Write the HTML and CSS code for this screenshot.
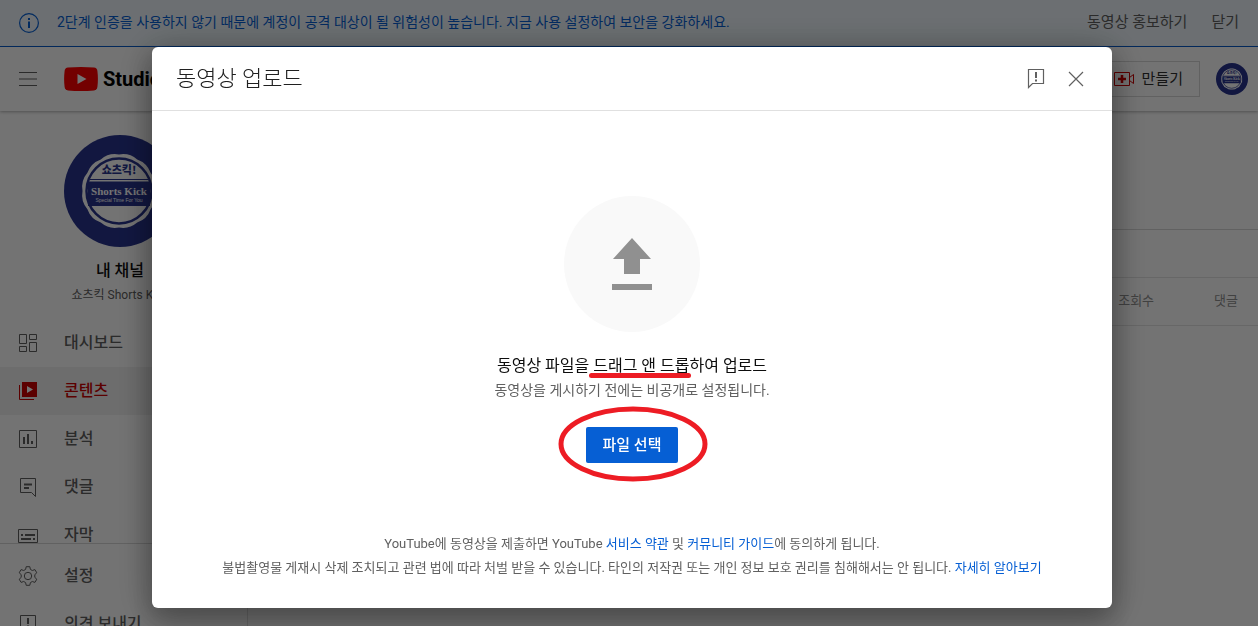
FILE: index.html
```html
<!DOCTYPE html>
<html lang="ko">
<head>
<meta charset="utf-8">
<meta name="viewport" content="width=device-width, initial-scale=1">
<title>YouTube Studio</title>
<link rel="stylesheet" href="styles.css">
</head>
<body>
<svg class="sprite" aria-hidden="true">
  <symbol id="badge" viewBox="0 0 112 112">
    <circle cx="56" cy="56" r="56" fill="#28348f"/>
    <path d="M91.500 56A22 22 0 0 1 86.600 74.200 22 22 0 0 1 73.200 87.600 22 22 0 0 1 55 92.500 22 22 0 0 1 36.800 87.600 22 22 0 0 1 23.400 74.200 22 22 0 0 1 18.500 56 22 22 0 0 1 23.400 37.800 22 22 0 0 1 36.800 24.400 22 22 0 0 1 55 19.500 22 22 0 0 1 73.200 24.400 22 22 0 0 1 86.600 37.800 22 22 0 0 1 91.500 56z" fill="#fff"/>
    <circle cx="55" cy="56" r="32.500" fill="none" stroke="#28348f" stroke-width="2.500"/>
    <path d="M26 44h58v1H26zM24 46.500h62V71H24z" fill="#28348f"/>
    <text class="badge-ko" x="55" y="39" text-anchor="middle">쇼츠킥!</text>
    <text class="badge-en" x="55" y="60" text-anchor="middle">Shorts Kick</text>
    <text class="badge-sub" x="55" y="67" text-anchor="middle">Special Time For You</text>
  </symbol>
</svg>

<div class="app">
  <div class="notice">
    <svg class="notice-icon" viewBox="0 0 20 20" fill="none" stroke="currentColor"><circle cx="10" cy="10" r="9.400" stroke-width="1.200"/><path d="M10 8.500V15M10 5v2" stroke-width="2"/></svg>
    <p class="notice-text">2단계 인증을 사용하지 않기 때문에 계정이 공격 대상이 될 위험성이 높습니다. 지금 사용 설정하여 보안을 강화하세요.</p>
    <button class="notice-action" type="button">동영상 홍보하기</button>
    <button class="notice-action" type="button">닫기</button>
  </div>

  <header class="topbar">
    <button class="icon-button" type="button" aria-label="메뉴">
      <svg width="18" height="14" viewBox="0 0 18 14" stroke="currentColor"><path d="M0 .5h18M0 7h18M0 13.500h18"/></svg>
    </button>
    <a class="brand" href="#" aria-label="YouTube Studio">
      <svg width="34" height="24" viewBox="0 0 34 24"><path d="M4 .6Q17-.6 30 .6q3 .4 3.400 3.400 1 8 0 16-.4 3-3.400 3.400-13 1.200-26 0-3-.4-3.400-3.400-1-8 0-16Q1 1 4 .6z" fill="#f00"/><path d="M13.500 7v10l9-5z" fill="#fff"/></svg>
      <span>Studio</span>
    </a>
    <button class="create" type="button">
      <svg width="20" height="14" viewBox="0 0 20 14" fill="none" stroke="#c00"><path d="M.5.5h15v13H.5z"/><path d="M15.500 5.500l4-3v9l-4-3"/><path d="M8 3v8M4 7h8" stroke-width="2.500"/></svg>
      <span>만들기</span>
    </button>
    <svg class="account"><use href="#badge"/></svg>
  </header>

  <div class="layout">
    <aside class="sidebar">
      <div class="channel">
        <svg class="channel-avatar"><use href="#badge"/></svg>
        <strong class="channel-title">내 채널</strong>
        <span class="channel-name">쇼츠킥 Shorts Kick</span>
      </div>
      <nav class="menu">
        <a class="menu-item" href="#"><svg viewBox="0 0 20 20"><path d="M1.500 1.500h7v9h-7zM11.500 1.500h7v5h-7zM1.500 13.500h7v5h-7zM11.500 9.500h7v9h-7z"/></svg><span>대시보드</span></a>
        <a class="menu-item active" href="#"><svg viewBox="0 0 20 20"><path d="M1.500 4v14.500H16"/><path d="M4 1h15v15H4z" fill="currentColor" stroke="none"/><path d="M9 5v7l6-3.500z" fill="#fff" stroke="none"/></svg><span>콘텐츠</span></a>
        <a class="menu-item" href="#"><svg viewBox="0 0 20 20"><path d="M1.500 1.500h17v17h-17z"/><path d="M6 8v7M10 5v10M14 12v3" stroke-width="2"/></svg><span>분석</span></a>
        <a class="menu-item" href="#"><svg viewBox="0 0 20 20"><path d="M2.500 1.500h15v18l-4-4h-11z"/><path d="M6 7.500h8M6 11h5" stroke-width="2"/></svg><span>댓글</span></a>
        <a class="menu-item" href="#"><svg viewBox="0 0 20 20"><path d="M.5 4.500h19v13H.5z"/><path d="M3 10h2M7 10h10M3 14h10M15 14h2" stroke-width="2"/></svg><span>자막</span></a>
      </nav>
      <div class="menu-footer">
        <a class="menu-item" href="#"><svg viewBox="0 0 20 20"><circle cx="10" cy="10" r="3.700"/><path d="M8.200.7h3.600l.6 2.700 1.900 1.100 2.600-.9 1.900 3.200-2 1.800v2.800l2 1.800-1.900 3.200-2.600-.9-1.900 1.100-.6 2.700H8.200l-.6-2.700-1.900-1.100-2.600.9-1.900-3.200 2-1.800V8.600l-2-1.800 1.900-3.200 2.600.9 1.900-1.100z"/></svg><span>설정</span></a>
        <a class="menu-item" href="#"><svg viewBox="0 0 20 20"><path d="M2.500 1.500h15v14h-11l-4 4z"/><path d="M10 4v6M10 11.500v2" stroke-width="2"/></svg><span>의견 보내기</span></a>
      </div>
    </aside>
    <main class="content">
      <div class="content-title"></div>
      <div class="content-filter"></div>
      <div class="content-columns"><span>조회수</span><span>댓글</span></div>
    </main>
  </div>
</div>

<div class="backdrop">
  <section class="dialog" role="dialog" aria-modal="true" aria-labelledby="dialog-title">
    <header class="dialog-header">
      <h1 id="dialog-title">동영상 업로드</h1>
      <button class="icon-button" type="button" aria-label="의견 보내기"><svg width="24" height="24" viewBox="0 0 24 24" fill="none" stroke="currentColor"><path d="M4.500 2.500h15v14h-11l-4 4z" stroke-width="1.200"/><path d="M12 5v6M12 12.500v2" stroke-width="2"/></svg></button>
      <button class="icon-button" type="button" aria-label="닫기"><svg width="24" height="24" viewBox="0 0 24 24" fill="none" stroke="currentColor" stroke-width="1.200"><path d="M5 5l14 14M19 5L5 19"/></svg></button>
    </header>
    <div class="upload">
      <div class="upload-circle">
        <svg width="40" height="52" viewBox="0 0 40 52" fill="#909090"><path d="M20 0l19 21H28v15H12V21H1zM0 46h40v6H0z"/></svg>
      </div>
      <h2 class="upload-title">동영상 파일을 <span class="marked">드래그 앤 드롭</span>하여 업로드</h2>
      <p class="upload-hint">동영상을 게시하기 전에는 비공개로 설정됩니다.</p>
      <div class="select-file">
        <button class="primary" type="button">파일 선택</button>
        <svg class="ring" viewBox="0 0 150 76" fill="none"><ellipse cx="75" cy="38" rx="72" ry="35" stroke="#ed1c24" stroke-width="5"/></svg>
      </div>
    </div>
    <footer class="legal">
      <p>YouTube에 동영상을 제출하면 YouTube <a href="#">서비스 약관</a> 및 <a href="#">커뮤니티 가이드</a>에 동의하게 됩니다.</p>
      <p>불법촬영물 게재시 삭제 조치되고 관련 법에 따라 처벌 받을 수 있습니다. 타인의 저작권 또는 개인 정보 보호 권리를 침해해서는 안 됩니다. <a href="#">자세히 알아보기</a></p>
    </footer>
  </section>
</div>
</body>
</html>
```

FILE: styles.css
```css
* { box-sizing: border-box; }

body {
  margin: 0;
  font-family: Roboto, "Noto Sans CJK KR", sans-serif;
  font-size: 14px;
  color: #606060;
}

h1, h2, p { margin: 0; font-weight: 400; }

button { font: inherit; color: inherit; cursor: pointer; }

a { color: #065fd4; text-decoration: none; }

.sprite { position: absolute; width: 0; height: 0; }

.badge-ko { font: 900 11px "Noto Sans CJK KR", sans-serif; fill: #28348f; }
.badge-en { font: bold 11px "Liberation Serif", serif; fill: #fff; }
.badge-sub { font: 5px "Liberation Sans", sans-serif; fill: #fff; }

.app {
  display: flex;
  flex-direction: column;
  height: 100vh;
  overflow: hidden;
  background: #fff;
}

.notice {
  display: flex;
  flex: none;
  align-items: center;
  gap: 24px;
  min-height: 47px;
  padding: 0 19px;
  border-bottom: 1px solid #065fd4;
  background: #eff7fd;
  color: #065fd4;
}

.notice-icon { flex: none; width: 20px; height: 20px; }
.notice-text { flex: 1; margin-left: -6px; padding-bottom: 4px; }

.notice-action {
  padding: 0 0 6px;
  border: 0;
  background: none;
  color: #606060;
  font-size: 15px;
}

.topbar {
  display: flex;
  flex: none;
  align-items: center;
  height: 64px;
  padding: 0 10px 0 19px;
  box-shadow: 0 1px 3px rgba(0, 0, 0, .3);
  z-index: 1;
}

.icon-button {
  display: flex;
  padding: 0;
  border: 0;
  background: none;
}

.brand {
  display: flex;
  align-items: center;
  gap: 5px;
  margin: 0 auto 0 27px;
  color: #000;
  font: bold 20px "Liberation Sans Narrow", Roboto, sans-serif;
}

.create {
  display: flex;
  align-items: center;
  gap: 8px;
  height: 36px;
  padding: 0 16px;
  margin-right: 16px;
  border: 1px solid #d8d8d8;
  background: none;
  color: #303030;
  font-size: 15px;
}

.create span { padding-bottom: 4px; }

.account { width: 32px; height: 32px; }

.layout { display: flex; flex: 1; min-height: 0; }

.sidebar {
  display: flex;
  flex: none;
  flex-direction: column;
  width: 248px;
  border-right: 1px solid #e0e0e0;
}

.channel {
  display: flex;
  flex: none;
  flex-direction: column;
  align-items: center;
  width: 240px;
  padding: 24px 0 12px;
}

.channel-avatar { width: 112px; height: 112px; margin-bottom: 12px; }
.channel-title { color: #0d0d0d; font-size: 16px; font-weight: 500; line-height: 24px; }
.channel-name { font-size: 12px; line-height: 24px; }

.menu { flex: 1; min-height: 0; overflow: hidden; }

.menu-footer {
  flex: none;
  height: 83px;
  padding-top: 8px;
  border-top: 1px solid #d8d8d8;
  overflow: hidden;
}

.menu-item {
  display: flex;
  align-items: center;
  gap: 26px;
  height: 48px;
  padding-left: 18px;
  color: #606060;
  font-size: 16px;
  font-weight: 500;
}

.menu-item span { padding-bottom: 4px; }

.menu-item svg {
  width: 20px;
  height: 20px;
  fill: none;
  stroke: currentColor;
}

.menu-item.active { background: #f2f2f2; color: #c00; }

.content { flex: 1; }
.content-title { height: 119px; border-bottom: 1px solid #d8d8d8; }
.content-filter { height: 48px; border-bottom: 1px solid #e4e4e4; }

.content-columns {
  display: flex;
  align-items: center;
  justify-content: flex-end;
  gap: 60px;
  height: 48px;
  padding: 0 20px 4px;
  border-bottom: 1px solid #e4e4e4;
  color: #909090;
  font-size: 13px;
}

.backdrop {
  position: fixed;
  inset: 0;
  z-index: 2;
  display: flex;
  justify-content: center;
  padding: 47px 16px 18px;
  background: rgba(0, 0, 0, .55);
}

.dialog {
  display: flex;
  flex-direction: column;
  width: 100%;
  max-width: 960px;
  margin-left: 6px;
  border-radius: 6px;
  background: #fff;
  box-shadow: 0 16px 24px 2px rgba(0, 0, 0, .14), 0 6px 30px 5px rgba(0, 0, 0, .12), 0 4px 40px rgba(0, 0, 0, .25);
}

.dialog-header {
  display: flex;
  align-items: center;
  gap: 16px;
  height: 64px;
  padding: 0 24px;
  border-bottom: 1px solid #e0e0e0;
}

.dialog-header h1 {
  flex: 1;
  padding-bottom: 6px;
  color: #202020;
  font-size: 22px;
  font-weight: 300;
}

.upload {
  display: flex;
  flex: 1;
  flex-direction: column;
  align-items: center;
  justify-content: center;
  padding-top: 16px;
  text-align: center;
}

.upload-circle {
  display: grid;
  place-items: center;
  width: 136px;
  height: 136px;
  margin-bottom: 22px;
  border-radius: 50%;
  background: #f9f9f9;
}

.upload-title { color: #0d0d0d; font-size: 16px; line-height: 24px; }
.upload-hint { line-height: 24px; }

.marked { position: relative; }

.marked::after {
  content: "";
  position: absolute;
  right: -2px;
  bottom: -3px;
  left: -4px;
  height: 5px;
  border-radius: 3px;
  background: #ed1c24;
}

.select-file { position: relative; margin-top: 25px; }

.primary {
  height: 36px;
  padding: 0 17px 4px;
  border: 0;
  border-radius: 2px;
  background: #065fd4;
  color: #fff;
  font-size: 15px;
  font-weight: 500;
}

.ring {
  position: absolute;
  top: -21px;
  left: -28px;
  width: 150px;
  height: 76px;
  pointer-events: none;
}

.legal {
  padding: 0 24px 28px;
  font-size: 13px;
  line-height: 24px;
  text-align: center;
}
```
